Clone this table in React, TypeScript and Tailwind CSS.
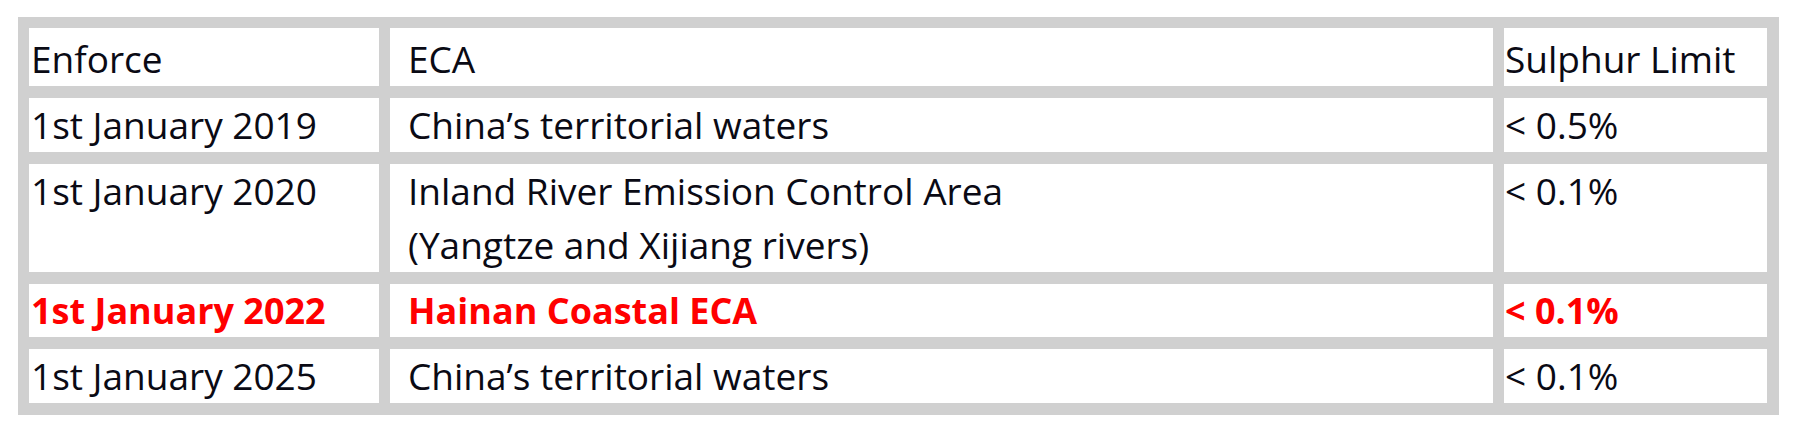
import React from "react";

type Row = { c1: string; c2: string[]; c3: string; h: string; hl?: boolean; pt?: string };

const rows: Row[] = [
  { c1: "Enforce", c2: ["ECA"], c3: "Sulphur Limit", h: "h-[58px]", pt: "pt-[4px]" },
  { c1: "1st January 2019", c2: ["China\u2019s territorial waters"], c3: "< 0.5%", h: "h-[54px]" },
  {
    c1: "1st January 2020",
    c2: ["Inland River Emission Control Area", "(Yangtze and Xijiang rivers)"],
    c3: "< 0.1%",
    h: "h-[108px]",
  },
  { c1: "1st January 2022", c2: ["Hainan Coastal ECA"], c3: "< 0.1%", h: "h-[53px]", hl: true, pt: "pt-0" },
  { c1: "1st January 2025", c2: ["China\u2019s territorial waters"], c3: "< 0.1%", h: "h-[54px]" },
];

export default function App() {
  return (
    <div className="w-[1799px] h-[435px] bg-white pt-[17px] pl-[18px] [font-family:'Open_Sans','Noto_Sans',sans-serif]">
      <div className="w-[1761px] bg-[#d0d0d0] pt-[11px] pb-[12px] pl-[11px] pr-[12px] grid grid-cols-[350px_1103px_263px] gap-x-[11px] gap-y-[12px]">
        {rows.map((r, i) => {
          const tone = r.hl
            ? "text-[#ff0000] font-bold text-[36px]"
            : "text-[#0a0a14] font-normal text-[37px]";
          const pt = r.pt ?? "pt-0";
          return (
            <React.Fragment key={i}>
              <div className={`bg-white ${r.h} ${pt} pl-[2px] leading-[54px] ${tone}`}>{r.c1}</div>
              <div className={`bg-white ${r.h} ${pt} pl-[18px] leading-[54px] ${tone}`}>
                {r.c2.map((l, j) => (
                  <div key={j}>{l}</div>
                ))}
              </div>
              <div className={`bg-white ${r.h} ${pt} pl-[1px] leading-[54px] whitespace-nowrap ${tone}`}>{r.c3}</div>
            </React.Fragment>
          );
        })}
      </div>
    </div>
  );
}
